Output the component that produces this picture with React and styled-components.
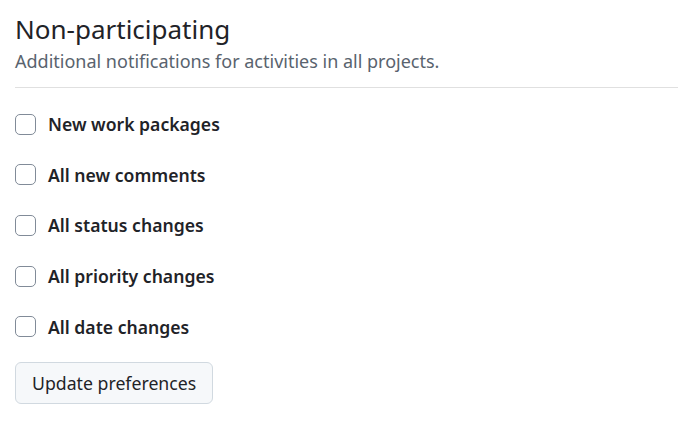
import React from 'react';
import styled, { createGlobalStyle } from 'styled-components';

const GlobalStyle = createGlobalStyle`
  body {
    margin: 0;
    background: #ffffff;
    font-family: "Noto Sans", "Open Sans", sans-serif;
    color: #1f2328;
  }
`;

const options = [
  'New work packages',
  'All new comments',
  'All status changes',
  'All priority changes',
  'All date changes',
];

const App = () => {
  const [checked, setChecked] = React.useState({});

  const toggle = name => {
    setChecked({ ...checked, [name]: !checked[name] });
  };

  return (
    <Page>
      <GlobalStyle />
      <Header>
        <Title>Non-participating</Title>
        <Subtitle>Additional notifications for activities in all projects.</Subtitle>
      </Header>
      <List>
        {options.map(name => (
          <Row key={name}>
            <Checkbox
              type="checkbox"
              checked={!!checked[name]}
              onChange={() => toggle(name)}
            />
            <Label>{name}</Label>
          </Row>
        ))}
      </List>
      <Button>Update preferences</Button>
    </Page>
  );
};

export default App;

const Page = styled.div`
  padding: 10px 1px 0 15px;
`;

const Header = styled.div`
  border-bottom: 1px solid #e0e0e0;
  padding-bottom: 12px;
`;

const Title = styled.h2`
  margin: 0;
  font-size: 26px;
  font-weight: 400;
  line-height: 38px;
  color: #1f2328;
`;

const Subtitle = styled.p`
  margin: 0;
  font-size: 18px;
  line-height: 27px;
  color: #59636e;
`;

const List = styled.div`
  display: flex;
  flex-direction: column;
  gap: 10px;
  padding-top: 16px;
`;

const Row = styled.label`
  display: flex;
  align-items: center;
  gap: 12px;
  height: 40.6px;
  cursor: pointer;
`;

const Checkbox = styled.input`
  appearance: none;
  margin: 0;
  width: 21px;
  height: 21px;
  border: 1px solid #818b98;
  border-radius: 5px;
  background: #ffffff;
  cursor: pointer;

  &:checked {
    background: #0969da;
    border-color: #0969da;
  }
`;

const Label = styled.span`
  font-size: 17.6px;
  font-weight: 600;
  color: #1f2328;
`;

const Button = styled.button`
  margin-top: 15px;
  height: 42px;
  padding: 0 16px;
  font-family: inherit;
  font-size: 17.7px;
  color: #1f2328;
  background: #f6f8fa;
  border: 1px solid #d1d9e0;
  border-radius: 6px;
  cursor: pointer;
`;
